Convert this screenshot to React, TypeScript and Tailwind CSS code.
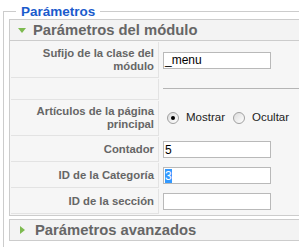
import React from "react";

const font = { fontFamily: '"Liberation Sans", Arial, sans-serif' };

function Row({ label, h, children }: { label?: React.ReactNode; h: string; children?: React.ReactNode }) {
  return (
    <div className={`flex ${h}`}>
      <div className="w-[148px] shrink-0 border-r border-b border-[#e3e3e3] bg-[#f6f6f6] pr-[4px] flex items-center justify-end text-right text-[11.3px] leading-[13px] font-bold text-[#666]">
        {label}
      </div>
      <div className="flex-1 pl-[4px] flex items-center">{children}</div>
    </div>
  );
}

function Input({ value, selected }: { value?: string; selected?: boolean }) {
  return (
    <div className="w-[108px] h-[17px] border border-[#b9b9b9] bg-white flex items-center pl-[1px] text-[12px] leading-[14px] text-black">
      {value ? (
        selected ? (
          <span className="bg-[#3399ff] text-white">{value}</span>
        ) : (
          <span>{value}</span>
        )
      ) : null}
    </div>
  );
}

function Radio({ checked }: { checked?: boolean }) {
  return (
    <span className="w-[12px] h-[12px] rounded-full border border-[#a0a0a0] bg-gradient-to-br from-[#dcdcdc] to-white flex items-center justify-center">
      {checked ? <span className="w-[4px] h-[4px] rounded-full bg-black" /> : null}
    </span>
  );
}

export default function App() {
  return (
    <div className="w-[299px] h-[247px] overflow-hidden bg-white relative" style={font}>
      <fieldset className="ml-[3px] mt-[4px] w-[330px] h-[260px] border border-[#cccccc] px-[5px] pt-[0px]">
        <legend className="ml-[7px] px-[5px] text-[13.5px] leading-[15px] font-bold text-[#1a5bcc]">Parámetros</legend>
        <div className="mt-[0px] border border-[#cccccc] bg-[#f6f6f6]">
          <div className="h-[21px] flex items-center border-b border-[#cccccc] bg-[#f3f3f3]">
            <svg width="8" height="5" viewBox="0 0 8 5" className="ml-[8px] mr-[7px]">
              <polygon points="0,0 8,0 4,5" fill="#7dba4f" />
            </svg>
            <span className="text-[14.8px] leading-[16px] font-bold text-[#666]">Parámetros del módulo</span>
          </div>
          <div className="flex flex-col gap-[1px] p-[1px] pr-0">
            <Row label={<span>Sufijo de la clase del<br />módulo</span>} h="h-[36px]">
              <Input value="_menu" />
            </Row>
            <Row h="h-[21px]">
              <div className="w-full h-[1px] bg-[#b5b5b5] -mt-[3px]" />
            </Row>
            <Row label={<span>Artículos de la página<br />principal</span>} h="h-[35px]">
              <div className="flex items-center text-[11.5px] text-[#222] ml-[4px] -mt-[2px]">
                <Radio checked />
                <span className="ml-[7px]">Mostrar</span>
                <span className="ml-[8px]"><Radio /></span>
                <span className="ml-[7px]">Ocultar</span>
              </div>
            </Row>
            <Row label="Contador" h="h-[25px]">
              <Input value="5" />
            </Row>
            <Row label="ID de la Categoría" h="h-[25px]">
              <Input value="3" selected />
            </Row>
            <Row label="ID de la sección" h="h-[25px]">
              <Input />
            </Row>
          </div>
        </div>
        <div className="mt-[3px] border border-[#cccccc] bg-[#f3f3f3] h-[22px] flex items-center">
          <svg width="5" height="8" viewBox="0 0 5 8" className="ml-[10px] mr-[10px]">
            <polygon points="0,0 5,4 0,8" fill="#7dba4f" />
          </svg>
          <span className="text-[14.8px] leading-[16px] font-bold text-[#666]">Parámetros avanzados</span>
        </div>
      </fieldset>
    </div>
  );
}
